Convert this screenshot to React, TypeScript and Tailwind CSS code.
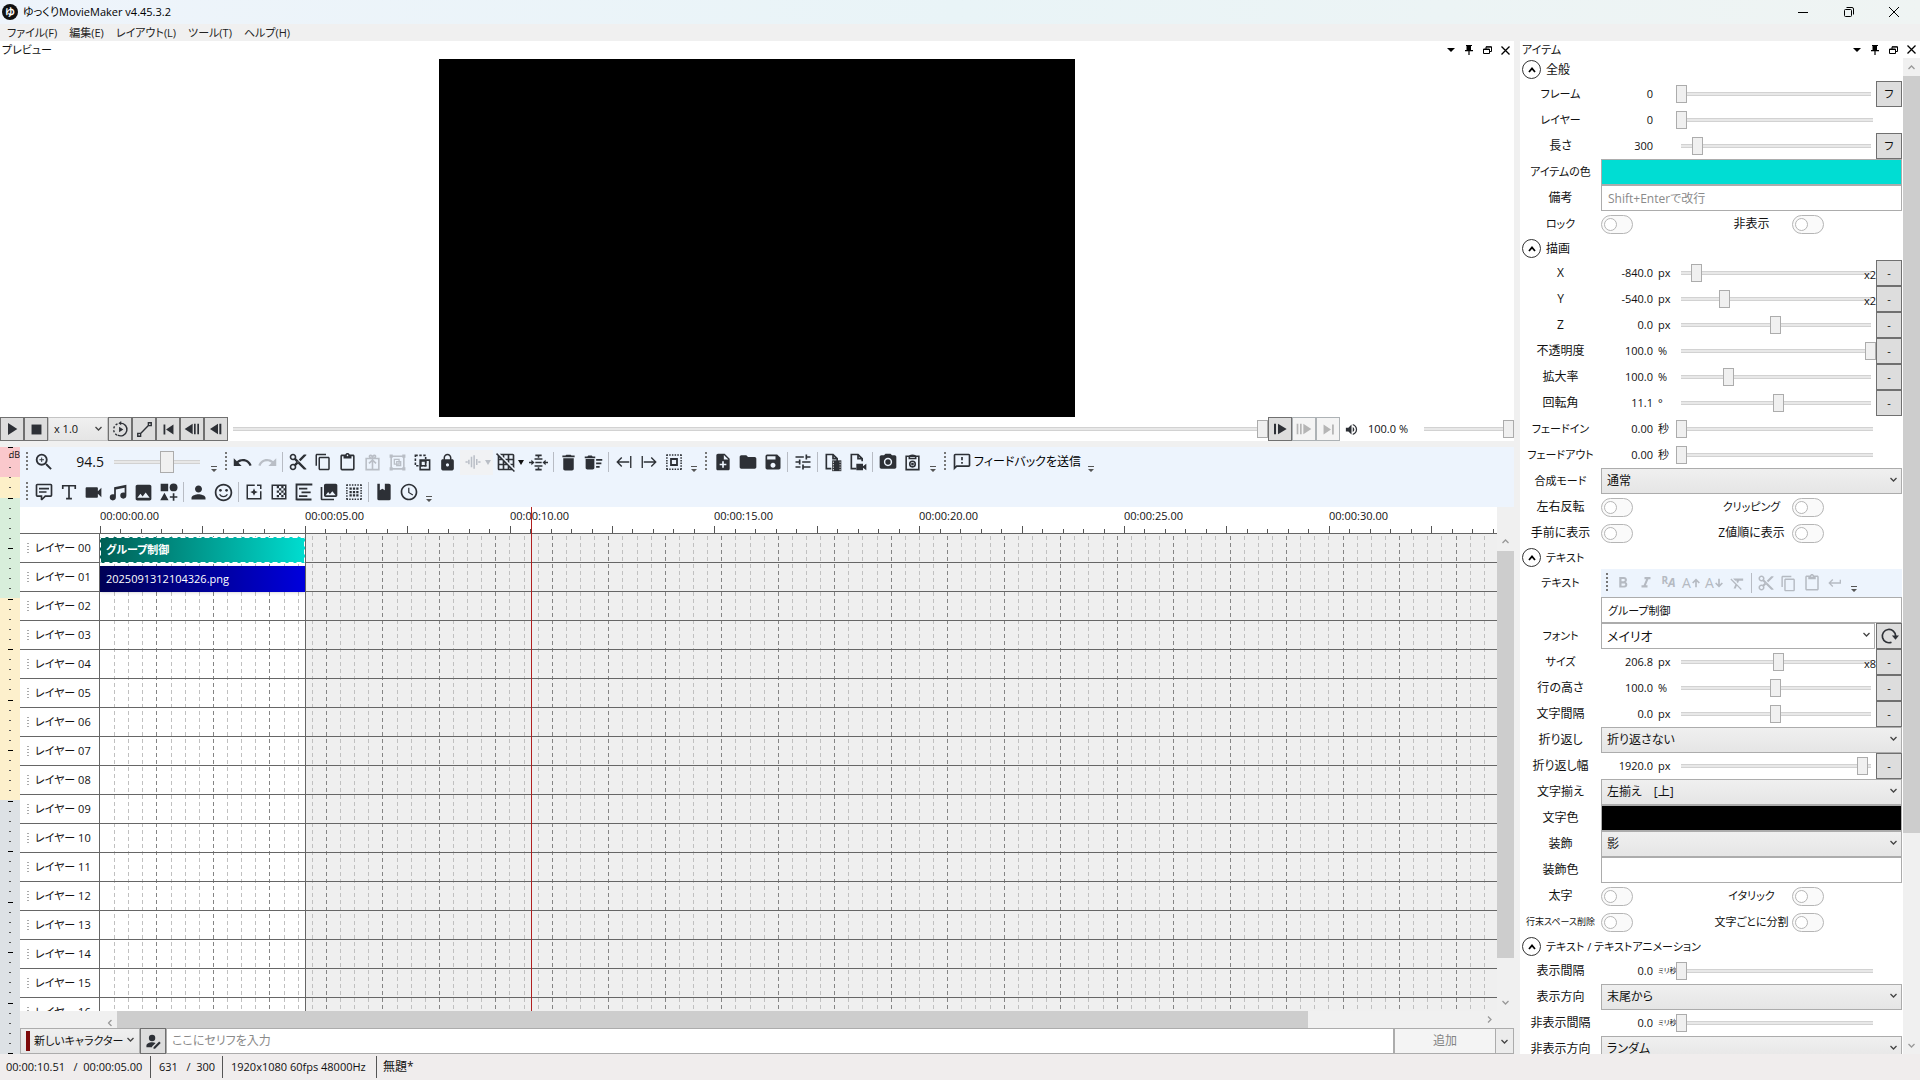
import type { ReactNode } from "react";
import {
  MdContentCopy,
  MdContentCut,
  MdContentPaste,
  MdDelete,
  MdDeleteSweep,
  MdFolder,
  MdFormatBold,
  MdFormatClear,
  MdFormatItalic,
  MdGridOff,
  MdImage,
  MdKeyboardReturn,
  MdLock,
  MdNoteAdd,
  MdOutlineFeedback,
  MdOutlineSentimentSatisfiedAlt,
  MdPerson,
  MdPhotoCamera,
  MdPhotoLibrary,
  MdRedo,
  MdSave,
  MdSchedule,
  MdTune,
  MdUndo,
  MdVideocam,
  MdVolumeUp,
  MdZoomIn,
} from "react-icons/md";

/* ---------- small drawings ---------- */

type IconProps = { children: ReactNode; size?: number };

// Filled 24-unit glyph
function Glyph({ children, size = 20 }: IconProps) {
  return (
    <svg width={size} height={size} viewBox="0 0 24 24" fill="currentColor" aria-hidden="true">
      {children}
    </svg>
  );
}

// Outlined 24-unit glyph
function Line({ children, size = 18 }: IconProps) {
  return (
    <svg width={size} height={size} viewBox="0 0 24 24" fill="none" stroke="currentColor" strokeWidth={2} aria-hidden="true">
      {children}
    </svg>
  );
}

const Chevron = ({ up = false }: { up?: boolean }) => (
  <svg width="7" height="5" viewBox="0 0 7 5" fill="none" stroke="currentColor" strokeWidth="1.3" aria-hidden="true">
    <path d={up ? "M.5 4 3.5 1l3 3" : "M.5 1l3 3 3-3"} />
  </svg>
);

const CommentIcon = () => (
  <Glyph>
    <path d="M9,22A1,1 0 0,1 8,21V18H4A2,2 0 0,1 2,16V4C2,2.89 2.9,2 4,2H20A2,2 0 0,1 22,4V16A2,2 0 0,1 20,18H13.9L10.2,21.71C10,21.9 9.75,22 9.5,22H9M10,16V19.08L13.08,16H20V4H4V16H10M6,7H18V9H6V7M6,11H15V13H6V11Z" />
  </Glyph>
);
const TypeIcon = () => (
  <Line size={20}>
    <path d="M4.500 8.500V4.500h15v4M12 5v15M8.500 20h7" />
  </Line>
);
const MusicIcon = () => (
  <Glyph size={21}>
    <path d="M21,3V15.5A3.5,3.5 0 0,1 17.5,19A3.5,3.5 0 0,1 14,15.5A3.5,3.5 0 0,1 17.5,12C18.04,12 18.55,12.12 19,12.34V6.47L9,8.6V17.5A3.5,3.5 0 0,1 5.5,21A3.5,3.5 0 0,1 2,17.5A3.5,3.5 0 0,1 5.5,14C6.04,14 6.55,14.12 7,14.34V6L21,3Z" />
  </Glyph>
);
const ShapesIcon = () => (
  <Glyph>
    <path d="M2 2h9v9H2zM6.500 13l5 9h-10zM16.500 13.500h2v3.500H22v2h-3.500v3.500h-2V19H13v-2h3.500z" />
    <circle cx="17.500" cy="6.500" r="4.700" />
  </Glyph>
);
const GiftIcon = () => (
  <Line size={19}>
    <path d="M4 7h16v14H4zM12 7v14M7.500 13 12 9l4.500 4M12 7C8 7 7 3 9.500 3S12 5 12 7c0-2 0-4 2.500-4S16 7 12 7" />
  </Line>
);
const GroupIcon = () => (
  <Line size={19}>
    <path d="M4 4h16v16H4z" />
    <path d="M8 8h6v6H8zM11 11h5v5h-5z" strokeWidth="1.600" />
    <path d="M2 2h4v4H2zM18 2h4v4h-4zM2 18h4v4H2zM18 18h4v4h-4z" fill="currentColor" stroke="none" />
  </Line>
);
const UngroupIcon = () => (
  <Line size={19}>
    <path d="M3 3h13v13H3z" strokeDasharray="3 2" />
    <path d="M9 9h12v12H9z" />
    <path d="M10 10h6v6h-6z" />
  </Line>
);
const WaveIcon = () => (
  <Line>
    <path d="M2 12h3M6.500 9v6M10 5v14M13.500 3v18M17 8v8M19 12h3" />
  </Line>
);
const AlignIcon = () => (
  <Line size={19}>
    <path d="M8 3h8M8 21h8M12 3v3M12 18v3M7 7.500h10M7 16.500h10M8 12h8M0 12h4M20 12h4" />
    <path d="M3 8.500l4 3.500-4 3.500zM21 8.500l-4 3.500 4 3.500z" fill="currentColor" stroke="none" />
  </Line>
);
const TrimStartIcon = () => (
  <Line>
    <path d="M21 4v16M19 12H3M9 6l-6 6 6 6" strokeWidth="1.800" />
  </Line>
);
const TrimEndIcon = () => (
  <Line>
    <path d="M3 4v16M5 12h16M15 6l6 6-6 6" strokeWidth="1.800" />
  </Line>
);
const SelectIcon = () => (
  <Line>
    <path d="M2 2.500h20M2 21.500h20M2.500 2v20M21.500 2v20" strokeDasharray="2 1.600" />
    <path d="M8 8h8v8H8z" strokeWidth="2.400" />
  </Line>
);
const DocFilmIcon = () => (
  <Line size={20}>
    <path d="M10 20H4V3h8l5 5v3M12 3v5h5" />
    <path d="M11 10h11v13H11z" fill="currentColor" stroke="none" />
    <path d="M12.500 11.500v11M20.500 11.500v11" stroke="#fff" strokeWidth="1" strokeDasharray="1.500 1.500" />
  </Line>
);
const DocVideoIcon = () => (
  <Line size={20}>
    <path d="M10 20H4V3h8l5 5v3M12 3v5h5" />
    <path d="M10 14h8v3l4-3v8l-4-3v3h-8z" fill="currentColor" stroke="none" />
  </Line>
);
const ClipCameraIcon = () => (
  <Line size={19}>
    <path d="M4 4h16v17H4z" />
    <path d="M8 5c0-3 8-3 8 0v2H8z" />
    <circle cx="12" cy="14" r="3.500" />
    <circle cx="12" cy="14" r=".8" />
  </Line>
);
const SparkleIcon = () => (
  <Line>
    <path d="M13 3H3v18h18V11M16 3h5v5" />
    <path d="M12 7l1.500 3.500L17 12l-3.500 1.500L12 17l-1.500-3.500L7 12l3.500-1.500z" fill="currentColor" stroke="none" />
  </Line>
);
const CheckerIcon = () => (
  <Line>
    <path d="M3 3h18v18H3z" />
    <path
      d="M9 4h3v3H9zM15 4h3v3h-3zM12 7h3v3h-3zM18 7h3v3h-3zM9 10h3v3H9zM15 10h3v3h-3zM12 13h3v3h-3zM18 13h3v3h-3zM9 16h3v3H9zM15 16h3v3h-3z"
      fill="currentColor"
      stroke="none"
    />
  </Line>
);
const FrameTextIcon = () => (
  <Line size={20}>
    <path d="M22 3H3v19M3 21h18M6 8h10M9 12.500h11M6 17h10" strokeWidth="2.200" />
  </Line>
);
const DotGridIcon = () => (
  <Line>
    <path d="M2 2.500h20M2 21.500h20M2.500 2v20M21.500 2v20" strokeDasharray="2 1.600" />
    <path
      d="M6 6h3v3H6zM10.500 6h3v3h-3zM15 6h3v3h-3zM6 10.500h3v3H6zM10.500 10.500h3v3h-3zM15 10.500h3v3h-3zM6 15h3v3H6zM10.500 15h3v3h-3zM15 15h3v3h-3z"
      fill="currentColor"
      stroke="none"
    />
  </Line>
);
const BookIcon = () => (
  <Glyph>
    <path d="M4 2h3v8l3-2 3 2V2h5a2 2 0 0 1 2 2v16a2 2 0 0 1-2 2H6a2 2 0 0 1-2-2z" />
  </Glyph>
);
const LoopPlayIcon = () => (
  <Line size={17}>
    <path d="M12 3a9 9 0 1 1-4 17" />
    <path d="M7 20a9 9 0 0 1 2-16.500" strokeDasharray="3 2.500" />
    <path d="M10 8l6 4-6 4zM13 0v6L9 3z" fill="currentColor" stroke="none" />
  </Line>
);
const PathIcon = () => (
  <Line size={17}>
    <path d="M2.500 17.500h4v4h-4zM17.500 2.500h4v4h-4zM6.500 17.500l11-11" />
  </Line>
);
const ReloadIcon = () => (
  <Line size={20}>
    <path d="M15 19.500A8 8 0 1 1 20 12" />
    <path d="M15.500 11.500h8.500l-4.200 5z" fill="currentColor" stroke="none" />
  </Line>
);
const PersonEditIcon = () => (
  <Glyph size={17}>
    <circle cx="10" cy="7" r="4.500" />
    <path d="M2 20v-2c0-3 4-5 8-5 2 0 3.500.4 5 1.200L10 19v1zM12 20l8-8 2.200 2.200-8 8H12z" />
  </Glyph>
);

/* ---------- shared controls ---------- */

const rangeClass =
  "appearance-none bg-transparent bg-no-repeat bg-center bg-[linear-gradient(#d2d2d2_1px,#e8e8e8_1px,#e8e8e8_3px,#d2d2d2_3px)] bg-[length:calc(100%-10px)_4px] [&::-webkit-slider-thumb]:appearance-none [&::-webkit-slider-thumb]:border [&::-webkit-slider-thumb]:border-[#acacac] [&::-webkit-slider-thumb]:bg-[#f0f0f0]";

function Range({ label, value, className = "" }: { label: string; value: number; className?: string }) {
  return (
    <input
      type="range"
      aria-label={label}
      defaultValue={value}
      step="any"
      className={`${rangeClass} h-[18px] min-w-0 flex-1 [&::-webkit-slider-thumb]:h-[18px] [&::-webkit-slider-thumb]:w-[11px] ${className}`}
    />
  );
}

function Select({ label, value, className = "" }: { label: string; value: string; className?: string }) {
  return (
    <div className={`relative h-[26px] min-w-0 flex-1 ${className}`}>
      <select aria-label={label} className="h-full w-full appearance-none border border-[#acacac] bg-transparent pl-[5px]">
        <option>{value}</option>
      </select>
      <span className="pointer-events-none absolute top-[9px] right-[5px] text-[#444]">
        <Chevron />
      </span>
    </div>
  );
}

const selectFill = "bg-linear-to-b from-[#f0f0f0] to-[#e5e5e5]";

function PaneButtons() {
  return (
    <div className="flex items-center text-black">
      <button aria-label="メニュー" className="flex h-4 w-[18px] items-center justify-center">
        <svg width="8" height="4" viewBox="0 0 8 4"><path d="M0 0h8L4 4z" /></svg>
      </button>
      <button aria-label="固定" className="flex h-4 w-[18px] items-center justify-center">
        <svg width="8" height="10" viewBox="0 0 8 10"><path d="M1 0h6v1H6v4h2v1.200H4.600V10H3.400V6.200H0V5h1.500V1H1z" /></svg>
      </button>
      <button aria-label="切り離す" className="flex h-4 w-[18px] items-center justify-center">
        <svg width="9" height="8" viewBox="0 0 9 8" fill="none" stroke="currentColor"><path d="M3 3V.8h5.500v4.700H6.500M.5 3h6v4.500h-6zM.5 3.500h6M3 1h5.500" /></svg>
      </button>
      <button aria-label="閉じる" className="flex h-4 w-[18px] items-center justify-center">
        <svg width="9" height="9" viewBox="0 0 9 9" fill="none" stroke="currentColor" strokeWidth="1.300"><path d="M.5.5l8 8M8.500.5l-8 8" /></svg>
      </button>
    </div>
  );
}

/* ---------- toolbar ---------- */

function Tool({ label, children, disabled = false }: { label: string; children: ReactNode; disabled?: boolean }) {
  return (
    <button
      aria-label={label}
      disabled={disabled}
      className="flex h-[25px] w-[25px] shrink-0 items-center justify-center text-[#2d3036] disabled:text-[#b9bec6]"
    >
      {children}
    </button>
  );
}

const Grip = () => (
  <span className="flex w-2 shrink-0 justify-center">
    <span className="h-5 w-[2px] bg-[repeating-linear-gradient(#777_0_2px,transparent_2px_4px)]" />
  </span>
);
const Sep = () => <span className="mx-[2px] h-5 w-px shrink-0 bg-[#b8bcc4]" />;
const Overflow = () => (
  <button aria-label="その他" className="flex w-4 shrink-0 justify-center self-end pb-[5px] text-[#555]">
    <svg width="6" height="6" viewBox="0 0 6 6"><path d="M0 0h6v1H0zM0 3h6L3 6z" fill="currentColor" /></svg>
  </button>
);
const MiniArrow = () => (
  <svg width="6" height="5" viewBox="0 0 6 5"><path d="M0 0h6L3 5z" fill="currentColor" /></svg>
);

function Toolbars() {
  return (
    <div className="h-[60px] bg-[#edf4fd] pl-[3px]">
      <div className="flex h-[30px] items-center">
        <Grip />
        <Tool label="拡大"><MdZoomIn size={22} /></Tool>
        <span className="w-[48px] text-right text-[14px]">94.5</span>
        <input
          type="range"
          aria-label="拡大率"
          defaultValue={62}
          className={`${rangeClass} mr-px ml-[5px] h-[22px] w-[96px] [&::-webkit-slider-thumb]:h-[22px] [&::-webkit-slider-thumb]:w-[14px]`}
        />
        <Overflow />
        <Grip />
        <Tool label="元に戻す"><MdUndo size={21} /></Tool>
        <Tool label="やり直す" disabled><MdRedo size={21} /></Tool>
        <Sep />
        <Tool label="切り取り"><MdContentCut size={20} /></Tool>
        <Tool label="コピー"><MdContentCopy size={18} /></Tool>
        <Tool label="貼り付け"><MdContentPaste size={19} /></Tool>
        <Tool label="特殊貼り付け" disabled><GiftIcon /></Tool>
        <Tool label="グループ化" disabled><GroupIcon /></Tool>
        <Tool label="グループ解除"><UngroupIcon /></Tool>
        <Tool label="ロック"><MdLock size={19} /></Tool>
        <span className="flex items-center bg-[#f1f2f4] text-[#b9bec6]">
          <Tool label="波形" disabled><WaveIcon /></Tool>
          <span className="w-2"><MiniArrow /></span>
        </span>
        <Tool label="グリッド"><MdGridOff size={20} /></Tool>
        <span className="w-2"><MiniArrow /></span>
        <Tool label="整列"><AlignIcon /></Tool>
        <Sep />
        <Tool label="削除"><MdDelete size={21} /></Tool>
        <Tool label="詰めて削除"><MdDeleteSweep size={21} /></Tool>
        <Sep />
        <Tool label="左を切り詰め"><TrimStartIcon /></Tool>
        <Tool label="右を切り詰め"><TrimEndIcon /></Tool>
        <Tool label="範囲選択"><SelectIcon /></Tool>
        <Overflow />
        <Grip />
        <Tool label="新規作成"><MdNoteAdd size={20} /></Tool>
        <Tool label="開く"><MdFolder size={20} /></Tool>
        <Tool label="保存"><MdSave size={20} /></Tool>
        <Sep />
        <Tool label="設定"><MdTune size={20} /></Tool>
        <Sep />
        <Tool label="動画出力"><DocFilmIcon /></Tool>
        <Tool label="連番出力"><DocVideoIcon /></Tool>
        <Sep />
        <Tool label="スクリーンショット"><MdPhotoCamera size={20} /></Tool>
        <Tool label="画像をコピー"><ClipCameraIcon /></Tool>
        <Overflow />
        <Grip />
        <button className="flex items-center pr-[2px] text-[#2d3036]">
          <span className="flex w-[25px] justify-center"><MdOutlineFeedback size={20} /></span>
          <span className="text-[12px] text-black">フィードバックを送信</span>
        </button>
        <Overflow />
      </div>
      <div className="flex h-[30px] items-center">
        <Grip />
        <Tool label="セリフ"><CommentIcon /></Tool>
        <Tool label="テキスト"><TypeIcon /></Tool>
        <Tool label="動画"><MdVideocam size={21} /></Tool>
        <Tool label="音声"><MusicIcon /></Tool>
        <Tool label="画像"><MdImage size={21} /></Tool>
        <Tool label="図形"><ShapesIcon /></Tool>
        <Sep />
        <Tool label="立ち絵"><MdPerson size={21} /></Tool>
        <Tool label="表情"><MdOutlineSentimentSatisfiedAlt size={21} /></Tool>
        <Sep />
        <Tool label="エフェクト"><SparkleIcon /></Tool>
        <Tool label="場面切り替え"><CheckerIcon /></Tool>
        <Tool label="シーン"><FrameTextIcon /></Tool>
        <Tool label="画面の複製"><MdPhotoLibrary size={20} /></Tool>
        <Tool label="グループ制御"><DotGridIcon /></Tool>
        <Sep />
        <Tool label="テンプレート"><BookIcon /></Tool>
        <Tool label="履歴"><MdSchedule size={20} /></Tool>
        <Overflow />
      </div>
    </div>
  );
}

/* ---------- preview ---------- */

const playButton =
  "flex h-6 w-6 shrink-0 items-center justify-center border border-[#707070] bg-[#dddddd] text-[#2d3036] disabled:border-[#adb2b5] disabled:bg-[#f4f4f4] disabled:text-[#b5b5b5]";

function Preview() {
  return (
    <section className="flex min-h-0 flex-[400] flex-col bg-white">
      <div className="flex h-[18px] shrink-0 items-center justify-between pl-[2px]">
        <h2 className="text-[11px]">プレビュー</h2>
        <PaneButtons />
      </div>
      <div className="flex min-h-0 flex-1 justify-center">
        <div className="aspect-video h-full bg-black" />
      </div>
      <div className="flex h-6 shrink-0 items-center">
        <button aria-label="再生" className={playButton}><Glyph size={16}><path d="M6 3l14 9-14 9z" /></Glyph></button>
        <button aria-label="停止" className={playButton}><Glyph size={17}><path d="M5 5h14v14H5z" /></Glyph></button>
        <div className={`relative h-6 w-[60px] ${selectFill}`}>
          <select aria-label="再生速度" className="h-full w-full appearance-none border border-[#c4c4c4] pl-[5px] text-[11px]">
            <option>x 1.0</option>
          </select>
          <span className="pointer-events-none absolute top-[9px] right-[6px] text-[#444]"><Chevron /></span>
        </div>
        <button aria-label="ループ再生" className={playButton}><LoopPlayIcon /></button>
        <button aria-label="範囲再生" className={playButton}><PathIcon /></button>
        <button aria-label="先頭へ" className={playButton}><Glyph size={17}><path d="M5 5h2.500v14H5zM19 5v14L8.500 12z" /></Glyph></button>
        <button aria-label="大きく戻る" className={playButton}><Glyph size={16}><path d="M13 4v16L1 12zM15 4h2.500v16H15zM20 4h2.500v16H20z" /></Glyph></button>
        <button aria-label="戻る" className={playButton}><Glyph size={16}><path d="M15 4v16L3 12zM17 4h3v16h-3z" /></Glyph></button>
        <Range label="再生位置" value={100} />
        <button aria-label="進む" className={playButton}><Glyph size={16}><path d="M9 4v16l13-8zM3 4h3v16H3z" /></Glyph></button>
        <button aria-label="大きく進む" className={playButton} disabled><Glyph size={16}><path d="M11 4v16l12-8zM1 4h2.500v16H1zM6 4h2.500v16H6z" /></Glyph></button>
        <button aria-label="末尾へ" className={playButton} disabled><Glyph size={17}><path d="M5 5v14l10.500-7zM17 5h2.500v14H17z" /></Glyph></button>
        <span className="flex w-[28px] pl-1 text-[#2d3036]"><MdVolumeUp size={15} /></span>
        <span className="w-[51px] text-[11px]">100.0 %</span>
        <div className="flex w-[95px]"><Range label="音量" value={100} /></div>
      </div>
    </section>
  );
}

/* ---------- timeline ---------- */

const FIVE_SECONDS = 204.8; // px on the timeline
const BEAT = 14.12;
const ROW = 29;
const layers = Array.from({ length: 17 }, (_, i) => `レイヤー ${String(i).padStart(2, "0")}`);

function LevelMeter() {
  return (
    <div className="relative flex w-5 shrink-0 flex-col overflow-hidden">
      <div className="h-[30px] bg-[#fac8cc]" />
      <div className="h-[21px] bg-[#fdf0c8]" />
      <div className="h-[100px] bg-[#d8eedb]" />
      <div className="h-[202px] bg-[#fdf0cc]" />
      <div className="flex-1 bg-[#dde1e5]" />
      <svg className="absolute inset-0 h-full w-full" aria-hidden="true">
        {Array.from({ length: 61 }, (_, i) => {
          const y = Math.round(i * 10.1) + 0.5;
          return i % 5 === 0 ? (
            <path key={i} d={`M8 ${y}h5`} stroke="#000" />
          ) : (
            <path key={i} d={`M9 ${y}h2`} stroke="#555" />
          );
        })}
      </svg>
      <span className="absolute top-0 right-0 text-[9px] leading-[16px]">dB</span>
    </div>
  );
}

function Ruler() {
  return (
    <div className="relative h-[27px] flex-1 overflow-hidden border-b border-[#666] bg-white text-[11px]">
      <svg className="absolute inset-0 h-full w-full" aria-hidden="true">
        {Array.from({ length: 70 }, (_, i) => {
          const x = Math.round((i * FIVE_SECONDS) / 10) + 0.5;
          return <path key={i} d={`M${x} ${i % 5 === 0 ? 19 : 22}V27`} stroke="#555" />;
        })}
      </svg>
      {[0, 5, 10, 15, 20, 25, 30].map((s) => (
        <span key={s} className="absolute top-0 leading-[18px]" style={{ left: Math.round((s / 5) * FIVE_SECONDS) }}>
          00:00:{String(s).padStart(2, "0")}.00
        </span>
      ))}
    </div>
  );
}

function Lanes() {
  return (
    <div className="relative min-w-0 flex-1 overflow-hidden border-l border-[#666] bg-[#efefef]">
      <svg className="absolute inset-0 h-full w-full" aria-hidden="true">
        <rect width="205" height="2000" fill="#fff" />
        {Array.from({ length: 99 }, (_, i) => {
          const x = Math.round((i + 1) * BEAT) + 0.5;
          return (
            <path
              key={i}
              d={`M${x} 2V1000`}
              stroke={(i + 1) % 4 === 0 ? "#858585" : "#c0c0c0"}
              strokeDasharray="4 3"
            />
          );
        })}
        {layers.map((l, i) => (
          <path key={l} d={`M0 ${i * ROW + 28.5}H4000`} stroke="#666" />
        ))}
        <path d="M205.5 0V1000" stroke="#666" />
      </svg>
      <button className="absolute top-[3px] left-0 flex h-[26px] w-[205px] items-center bg-linear-to-r from-[#005f55] to-[#00ddd0] pl-[6px] text-[11px] font-bold text-white">
        <svg className="absolute inset-0 h-full w-full" fill="none" stroke="#fff" strokeDasharray="5 3" aria-hidden="true">
          <rect x=".5" y=".5" width="204" height="25" />
        </svg>
        グループ制御
      </button>
      <button className="absolute top-[32px] left-0 flex h-[26px] w-[205px] items-center bg-linear-to-r from-[#000055] to-[#0000dd] pl-[6px] text-[11px] text-white shadow">
        2025091312104326.png
      </button>
    </div>
  );
}

function Timeline() {
  return (
    <section className="flex min-h-0 flex-[607]">
      <LevelMeter />
      <div className="flex min-w-0 flex-1 flex-col">
        <Toolbars />
        <div className="flex min-h-0 flex-1">
          <div className="relative flex min-w-0 flex-1 flex-col">
            <div className="flex shrink-0">
              <div className="w-20 shrink-0 border-b border-[#666] bg-white" />
              <Ruler />
            </div>
            <div className="flex min-h-0 flex-1">
              <ol className="w-[79px] shrink-0 overflow-hidden bg-white text-[11px]">
                {layers.map((l) => (
                  <li key={l} className="flex h-[29px] items-center border-b border-[#666] pl-[7px]">
                    <span className="h-[10px] w-[2px] bg-[repeating-linear-gradient(#aaa_0_1px,transparent_1px_3px)]" />
                    <span className="ml-[6px] whitespace-nowrap">{l}</span>
                  </li>
                ))}
              </ol>
              <Lanes />
            </div>
            <div className="absolute top-0 bottom-0 left-[511px] w-px bg-[#b02020]" />
          </div>
          <div className="flex w-[17px] shrink-0 flex-col items-center bg-[#f0f0f0] pt-[32px] pb-[6px] text-[#999]">
            <Chevron up />
            <div className="mt-[7px] h-[407px] w-full bg-[#cdcdcd]" />
            <span className="mt-auto"><Chevron /></span>
          </div>
        </div>
        <div className="flex h-[17px] shrink-0 items-center bg-[#f0f0f0] px-[21px] text-[#999]">
          <span className="ml-[62px] w-[14px] -rotate-90"><Chevron up /></span>
          <div className="h-full w-[82%] bg-[#cdcdcd]" />
          <span className="ml-auto rotate-90"><Chevron up /></span>
        </div>
        <div className="flex h-[26px] shrink-0">
          <div className={`relative w-[120px] ${selectFill}`}>
            <select aria-label="キャラクター" className="h-full w-full appearance-none border border-[#acacac] pl-[13px] text-[11px]">
              <option>新しいキャラクター</option>
            </select>
            <span className="absolute top-[3px] left-[6px] h-5 w-1 bg-[#7d0a0a]" />
            <span className="pointer-events-none absolute top-[9px] right-[6px] text-[#444]"><Chevron /></span>
          </div>
          <button aria-label="キャラクター編集" className="flex w-[26px] items-center justify-center border border-[#707070] bg-[#dddddd] text-[#2d3036]">
            <PersonEditIcon />
          </button>
          <input
            aria-label="セリフ"
            placeholder="ここにセリフを入力"
            className="min-w-0 flex-1 border border-[#acacac] bg-white pl-[5px] placeholder:text-[#8a8a8a]"
          />
          <button disabled className="w-[102px] border border-[#acacac] bg-[#f4f4f4] text-[#838383]">追加</button>
          <button aria-label="追加方法" className="flex w-[18px] items-center justify-center border border-l-0 border-[#acacac] bg-[#ececec] text-[#444]">
            <Chevron />
          </button>
        </div>
      </div>
    </section>
  );
}

/* ---------- item panel ---------- */

// Labels written mostly in kana are set one size down
const labelSize = (text: string) => (/[ァ-ヶー]{3}/.test(text) ? "text-[11px]" : "");

function Row({ label, children }: { label: string; children: ReactNode }) {
  return (
    <div className="flex h-[26px] items-center">
      <span className={`w-[81px] shrink-0 text-center whitespace-nowrap ${labelSize(label)}`}>{label}</span>
      {children}
    </div>
  );
}

type SliderProps = {
  label: string;
  num: string;
  unit?: string;
  value: number;
  button?: string;
  scale?: string;
};

function SliderRow({ label, num, unit, value, button, scale }: SliderProps) {
  return (
    <Row label={label}>
      <span className="w-[52px] shrink-0 text-right text-[11px]">{num}</span>
      <span className={`w-[23px] shrink-0 pl-[5px] whitespace-nowrap ${unit === "ミリ秒" ? "text-[7px]" : "text-[11px]"}`}>{unit}</span>
      <span className="relative flex min-w-0 flex-1">
        <Range label={label} value={value} />
        {scale && <span className="absolute top-[2px] right-0 text-[11px] leading-[18px]">{scale}</span>}
      </span>
      {button ? (
        <button className="h-[26px] w-[26px] shrink-0 border border-[#707070] bg-[#dddddd] text-[11px]">{button}</button>
      ) : (
        <span className="w-[24px] shrink-0" />
      )}
    </Row>
  );
}

function SelectRow({ label, value }: { label: string; value: string }) {
  return (
    <Row label={label}>
      <Select label={label} value={value} className={selectFill} />
    </Row>
  );
}

function ToggleRow({ left, right, small }: { left: string; right: string; small?: boolean }) {
  return (
    <div className="grid h-[26px] grid-cols-2">
      {[left, right].map((t, i) => (
        <label key={t} className="flex items-center">
          <span className={`w-[81px] shrink-0 text-center whitespace-nowrap ${small ? (i === 0 ? "text-[9px]" : "text-[11px]") : labelSize(t)}`}>{t}</span>
          <input
            type="checkbox"
            className="h-[19px] w-8 appearance-none rounded-full border border-[#b5b5b5] bg-[#fafafa] before:m-[2px] before:block before:h-[13px] before:w-[13px] before:rounded-full before:border before:border-[#b5b5b5] before:bg-white"
          />
        </label>
      ))}
    </div>
  );
}

function Section({ title, children }: { title: string; children: ReactNode }) {
  return (
    <section>
      <h3 className={`flex h-[23px] items-center pl-[2px] ${labelSize(title)}`}>
        <button aria-label={`${title}を閉じる`} className="mr-[5px] flex h-[19px] w-[19px] items-center justify-center rounded-full border border-[#333] text-black">
          <svg width="8" height="6" viewBox="0 0 8 6" fill="none" stroke="currentColor" strokeWidth="1.800"><path d="M1 5l3-3.500L7 5" /></svg>
        </button>
        {title}
      </h3>
      {children}
    </section>
  );
}

const miniTool = "flex w-[23px] shrink-0 items-center justify-center";

function TextTools() {
  return (
    <div className="flex h-7 shrink-0 items-center bg-[#edf4fd] pl-[2px] text-[#b5bac2]">
      <Grip />
      <button aria-label="太字" disabled className={miniTool}><MdFormatBold size={18} /></button>
      <button aria-label="斜体" disabled className={miniTool}><MdFormatItalic size={18} /></button>
      <button aria-label="書式" disabled className={miniTool}>
        <span className="self-start text-[10px] leading-[14px] font-bold">R</span>
        <span className="text-[12px] leading-[20px] font-bold italic">A</span>
      </button>
      <button aria-label="大きく" disabled className={miniTool}>
        <span className="text-[14px]">A</span>
        <Line size={10}><path d="M12 22V4M4 12l8-8 8 8" strokeWidth="4" /></Line>
      </button>
      <button aria-label="小さく" disabled className={miniTool}>
        <span className="text-[14px]">A</span>
        <Line size={10}><path d="M12 2v18M4 12l8 8 8-8" strokeWidth="4" /></Line>
      </button>
      <button aria-label="書式を消去" disabled className={miniTool}><MdFormatClear size={17} /></button>
      <Sep />
      <button aria-label="切り取り" disabled className={miniTool}><MdContentCut size={18} /></button>
      <button aria-label="コピー" disabled className={miniTool}><MdContentCopy size={17} /></button>
      <button aria-label="貼り付け" disabled className={miniTool}><MdContentPaste size={18} /></button>
      <button aria-label="改行" disabled className={miniTool}><MdKeyboardReturn size={16} /></button>
      <Overflow />
    </div>
  );
}

function ItemPanel() {
  return (
    <aside className="flex w-[400px] shrink-0 flex-col bg-white">
      <div className="flex h-[17px] shrink-0 items-center justify-between pl-[2px]">
        <h2 className="text-[11px]">アイテム</h2>
        <PaneButtons />
      </div>
      <div className="flex min-h-0 flex-1">
        <div className="min-w-0 flex-1 overflow-hidden pr-px">
          <Section title="全般">
            <SliderRow label="フレーム" num="0" value={0} button="フ" />
            <SliderRow label="レイヤー" num="0" value={0} />
            <SliderRow label="長さ" num="300" value={8.5} button="フ" />
            <Row label="アイテムの色">
              <button aria-label="アイテムの色" className="h-[26px] flex-1 border border-[#acacac] bg-[#00ddd3]" />
            </Row>
            <Row label="備考">
              <input aria-label="備考" placeholder="Shift+Enterで改行" className="h-[26px] min-w-0 flex-1 border border-[#acacac] pl-[6px] placeholder:text-[#8a8a8a]" />
            </Row>
            <ToggleRow left="ロック" right="非表示" />
          </Section>
          <Section title="描画">
            <SliderRow label="X" num="-840.0" unit="px" value={8} button="-" scale="x2" />
            <SliderRow label="Y" num="-540.0" unit="px" value={23} button="-" scale="x2" />
            <SliderRow label="Z" num="0.0" unit="px" value={49.7} button="-" />
            <SliderRow label="不透明度" num="100.0" unit="%" value={100} button="-" />
            <SliderRow label="拡大率" num="100.0" unit="%" value={25} button="-" />
            <SliderRow label="回転角" num="11.1" unit="°" value={51.5} button="-" />
            <SliderRow label="フェードイン" num="0.00" unit="秒" value={0} />
            <SliderRow label="フェードアウト" num="0.00" unit="秒" value={0} />
            <SelectRow label="合成モード" value="通常" />
            <ToggleRow left="左右反転" right="クリッピング" />
            <ToggleRow left="手前に表示" right="Z値順に表示" />
          </Section>
          <Section title="テキスト">
            <div className="flex">
              <span className="w-[81px] shrink-0 text-center text-[11px] leading-[28px]">テキスト</span>
              <div className="flex min-w-0 flex-1 flex-col">
                <TextTools />
                <input aria-label="テキスト" defaultValue="グループ制御" className="h-[26px] w-full border border-[#acacac] pl-[6px] text-[11px]" />
              </div>
            </div>
            <Row label="フォント">
              <Select label="フォント" value="メイリオ" className="text-[13px]" />
              <button aria-label="フォントの再読み込み" className="ml-px flex h-[26px] w-[26px] items-center justify-center border border-[#707070] bg-[#dddddd] text-[#2d3036]">
                <ReloadIcon />
              </button>
            </Row>
            <SliderRow label="サイズ" num="206.8" unit="px" value={51.5} button="-" scale="x8" />
            <SliderRow label="行の高さ" num="100.0" unit="%" value={49.7} button="-" />
            <SliderRow label="文字間隔" num="0.0" unit="px" value={49.7} button="-" />
            <SelectRow label="折り返し" value="折り返さない" />
            <SliderRow label="折り返し幅" num="1920.0" unit="px" value={96} button="-" />
            <SelectRow label="文字揃え" value="左揃え　[上]" />
            <Row label="文字色">
              <button aria-label="文字色" className="h-[26px] flex-1 border border-[#acacac] bg-black" />
            </Row>
            <SelectRow label="装飾" value="影" />
            <Row label="装飾色">
              <button aria-label="装飾色" className="h-[26px] flex-1 border border-[#acacac] bg-white" />
            </Row>
            <ToggleRow left="太字" right="イタリック" />
            <ToggleRow left="行末スペース削除" right="文字ごとに分割" small />
          </Section>
          <Section title="テキスト / テキストアニメーション">
            <SliderRow label="表示間隔" num="0.0" unit="ミリ秒" value={0} />
            <SelectRow label="表示方向" value="末尾から" />
            <SliderRow label="非表示間隔" num="0.0" unit="ミリ秒" value={0} />
            <SelectRow label="非表示方向" value="ランダム" />
          </Section>
        </div>
        <div className="flex w-[17px] shrink-0 flex-col items-center bg-[#f0f0f0] pt-[7px] pb-[6px] text-[#999]">
          <Chevron up />
          <div className="mt-[6px] h-[77%] w-full bg-[#cdcdcd]" />
          <span className="mt-auto"><Chevron /></span>
        </div>
      </div>
    </aside>
  );
}

/* ---------- window ---------- */

const menus = ["ファイル(F)", "編集(E)", "レイアウト(L)", "ツール(T)", "ヘルプ(H)"];

export default function App() {
  return (
    <div className="flex h-screen flex-col overflow-hidden bg-[#f0f0f0] font-['Open_Sans','Noto_Sans_CJK_JP',sans-serif] text-[12px] leading-[18px] text-[#111] [font-feature-settings:'palt']">
      <header className="flex h-6 shrink-0 items-center bg-linear-to-r from-[#eef4fb] via-[#e9f4f7] to-[#eff4f3] pl-[2px] text-black">
        <span className="flex h-4 w-4 items-center justify-center rounded-full bg-[#111] text-[10px] leading-none font-bold text-white">ゆ</span>
        <h1 className="ml-[5px] text-[11px]">ゆっくりMovieMaker v4.45.3.2</h1>
        <div className="ml-auto flex">
          <button aria-label="最小化" className="flex w-[46px] items-center justify-center">
            <svg width="10" height="10" viewBox="0 0 10 10"><path d="M0 5h10v1H0z" /></svg>
          </button>
          <button aria-label="元に戻す" className="flex w-[46px] items-center justify-center">
            <svg width="10" height="10" viewBox="0 0 10 10" fill="none" stroke="currentColor">
              <rect x=".5" y="2.500" width="7" height="7" rx="1" />
              <path d="M2.500.5H8a1.500 1.500 0 0 1 1.500 1.500v5.500" />
            </svg>
          </button>
          <button aria-label="閉じる" className="flex w-[48px] items-center justify-center pr-[4px]">
            <svg width="10" height="10" viewBox="0 0 10 10" stroke="currentColor"><path d="M0 0l10 10M10 0L0 10" /></svg>
          </button>
        </div>
      </header>
      <nav className="flex h-[17px] shrink-0 items-center gap-3 pl-[7px] text-[11px] text-[#222]">
        {menus.map((m) => (
          <button key={m}>{m}</button>
        ))}
      </nav>
      <main className="flex min-h-0 flex-1 gap-[6px]">
        <div className="flex min-w-0 flex-1 flex-col gap-[6px]">
          <Preview />
          <Timeline />
        </div>
        <ItemPanel />
      </main>
      <footer className="flex h-[26px] shrink-0 items-center bg-[#f0eded] pl-[6px] text-[11px] whitespace-pre">
        <span className="w-[144px]">00:00:10.51   /  00:00:05.00</span>
        <span className="flex h-[22px] w-[72px] items-center border-l border-[#555] pl-[8px]">631   /  300</span>
        <span className="flex h-[22px] w-[154px] items-center border-l border-[#555] pl-[8px]">1920x1080 60fps 48000Hz</span>
        <span className="flex h-[22px] items-center border-l border-[#555] pl-[6px] text-[12px]">無題*</span>
      </footer>
    </div>
  );
}
